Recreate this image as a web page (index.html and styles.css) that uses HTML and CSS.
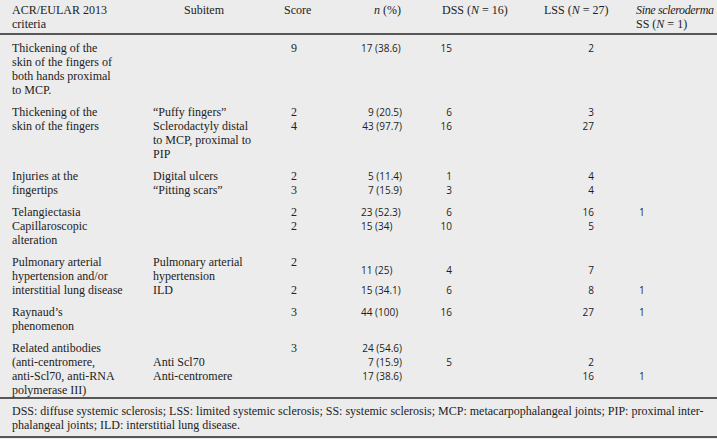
FILE: index.html
```html
<!DOCTYPE html>
<html>
<head>
<meta charset="utf-8">
<link rel="stylesheet" href="styles.css">
</head>
<body>
<table class="tbl">
  <colgroup>
    <col class="w1"><col class="w2"><col class="w3"><col class="w4"><col class="w5"><col class="w6"><col class="w7">
  </colgroup>
  <thead>
    <tr>
      <th class="c1">ACR/EULAR 2013<br>criteria</th>
      <th class="c2h">Subitem</th>
      <th class="c3h">Score</th>
      <th class="c4h"><i>n</i> (%)</th>
      <th class="c5h">DSS (<i>N</i> = 16)</th>
      <th class="c6h">LSS (<i>N</i> = 27)</th>
      <th class="c7h"><i class="sine">Sine scleroderma</i><br>SS (<i>N</i> = 1)</th>
    </tr>
  </thead>
  <tbody>
    <tr class="first">
      <td class="c1">Thickening of the<br>skin of the fingers of<br>both hands proximal<br>to MCP.</td>
      <td class="c2"></td>
      <td class="c3">9</td>
      <td class="c4 num">17 (38.6)</td>
      <td class="c5 num">15</td>
      <td class="c6 num">2</td>
      <td class="c7 num"></td>
    </tr>
    <tr>
      <td class="c1">Thickening of the<br>skin of the fingers</td>
      <td class="c2">“Puffy fingers”<br>Sclerodactyly distal<br>to MCP, proximal to<br>PIP</td>
      <td class="c3">2<br>4</td>
      <td class="c4 num r">9 (20.5)<br>43 (97.7)</td>
      <td class="c5 num">6<br>16</td>
      <td class="c6 num">3<br>27</td>
      <td class="c7 num"></td>
    </tr>
    <tr>
      <td class="c1">Injuries at the<br>fingertips</td>
      <td class="c2">Digital ulcers<br>“Pitting scars”</td>
      <td class="c3">2<br>3</td>
      <td class="c4 num r">5 (11.4)<br>7 (15.9)</td>
      <td class="c5 num">1<br>3</td>
      <td class="c6 num">4<br>4</td>
      <td class="c7 num"></td>
    </tr>
    <tr>
      <td class="c1">Telangiectasia<br>Capillaroscopic<br>alteration</td>
      <td class="c2"></td>
      <td class="c3">2<br>2</td>
      <td class="c4 num">23 (52.3)<br>15 (34)</td>
      <td class="c5 num">6<br>10</td>
      <td class="c6 num">16<br>5</td>
      <td class="c7 num">1</td>
    </tr>
    <tr>
      <td class="c1">Pulmonary arterial<br>hypertension and/or<br>interstitial lung disease</td>
      <td class="c2">Pulmonary arterial<br>hypertension<br>ILD</td>
      <td class="c3">2<br><br>2</td>
      <td class="c4 num"><div class="off">11 (25)</div><div class="gap">15 (34.1)</div></td>
      <td class="c5 num"><div class="off">4</div><div class="gap">6</div></td>
      <td class="c6 num"><div class="off">7</div><div class="gap">8</div></td>
      <td class="c7 num"><br><br>1</td>
    </tr>
    <tr>
      <td class="c1">Raynaud’s<br>phenomenon</td>
      <td class="c2"></td>
      <td class="c3">3</td>
      <td class="c4 num">44 (100)</td>
      <td class="c5 num">16</td>
      <td class="c6 num">27</td>
      <td class="c7 num">1</td>
    </tr>
    <tr class="last">
      <td class="c1">Related antibodies<br>(anti-centromere,<br>anti-Scl70, anti-RNA<br>polymerase III)</td>
      <td class="c2"><br>Anti Scl70<br>Anti-centromere</td>
      <td class="c3">3</td>
      <td class="c4 num r">24 (54.6)<br>7 (15.9)<br>17 (38.6)</td>
      <td class="c5 num"><br>5</td>
      <td class="c6 num"><br>2<br>16</td>
      <td class="c7 num"><br><br>1</td>
    </tr>
  </tbody>
  <tfoot>
    <tr>
      <td class="foot" colspan="7">DSS: diffuse systemic sclerosis; LSS: limited systemic sclerosis; SS: systemic sclerosis; MCP: metacarpophalangeal joints; PIP: proximal inter-<br>phalangeal joints; ILD: interstitial lung disease.</td>
    </tr>
  </tfoot>
</table>
</body>
</html>
```

FILE: styles.css
```css
html, body {
  margin: 0;
  padding: 0;
  background: #ececec;
}
body {
  width: 717px;
  height: 439px;
  overflow: hidden;
  font-family: "Liberation Serif", "Times New Roman", serif;
  font-size: 12px;
  line-height: 14px;
  color: #222;
}
.tbl {
  width: 717px;
  border-collapse: collapse;
  table-layout: fixed;
}
.w1 { width: 153px; }
.w2 { width: 131px; }
.w3 { width: 77px; }
.w4 { width: 79px; }
.w5 { width: 100px; }
.w6 { width: 95px; }
.w7 { width: 82px; }

th {
  font-weight: normal;
  text-align: left;
  vertical-align: top;
  white-space: nowrap;
  padding: 3px 0 2px 0;
  border-bottom: 2px solid #575757;
}
td {
  vertical-align: top;
  white-space: nowrap;
  padding: 4px 0 4px 0;
}
.first td { padding-top: 6px; }
.last td { padding-bottom: 0; }

.c1 { padding-left: 12px; }
.c2h { padding-left: 31px; }
.c3h { padding-left: 0; }
.c4h { padding-left: 13px; }
.c5h { padding-left: 2px; }
.c6h { padding-left: 4px; }
.c7h { padding-left: 1px; }
.sine { letter-spacing: -0.35px; }

.num {
  font-family: "Open Sans", "Noto Sans", sans-serif;
  font-size: 10px;
  color: #1c1c1c;
}
.c3 {
  font-family: "Liberation Serif", serif;
  padding-left: 7px;
}
.c4 { padding-right: 38px; text-align: left; }
.c4.r { text-align: right; }
.c5 { text-align: right; padding-right: 88px; }
.c6 { text-align: right; padding-right: 41px; }
.c7 { padding-left: 4px; }

.off { padding-top: 8px; }
.gap { padding-top: 6px; }

.foot {
  padding: 5px 0 4px 12px;
  border-top: 2px solid #575757;
  border-bottom: 2px solid #575757;
}
```
